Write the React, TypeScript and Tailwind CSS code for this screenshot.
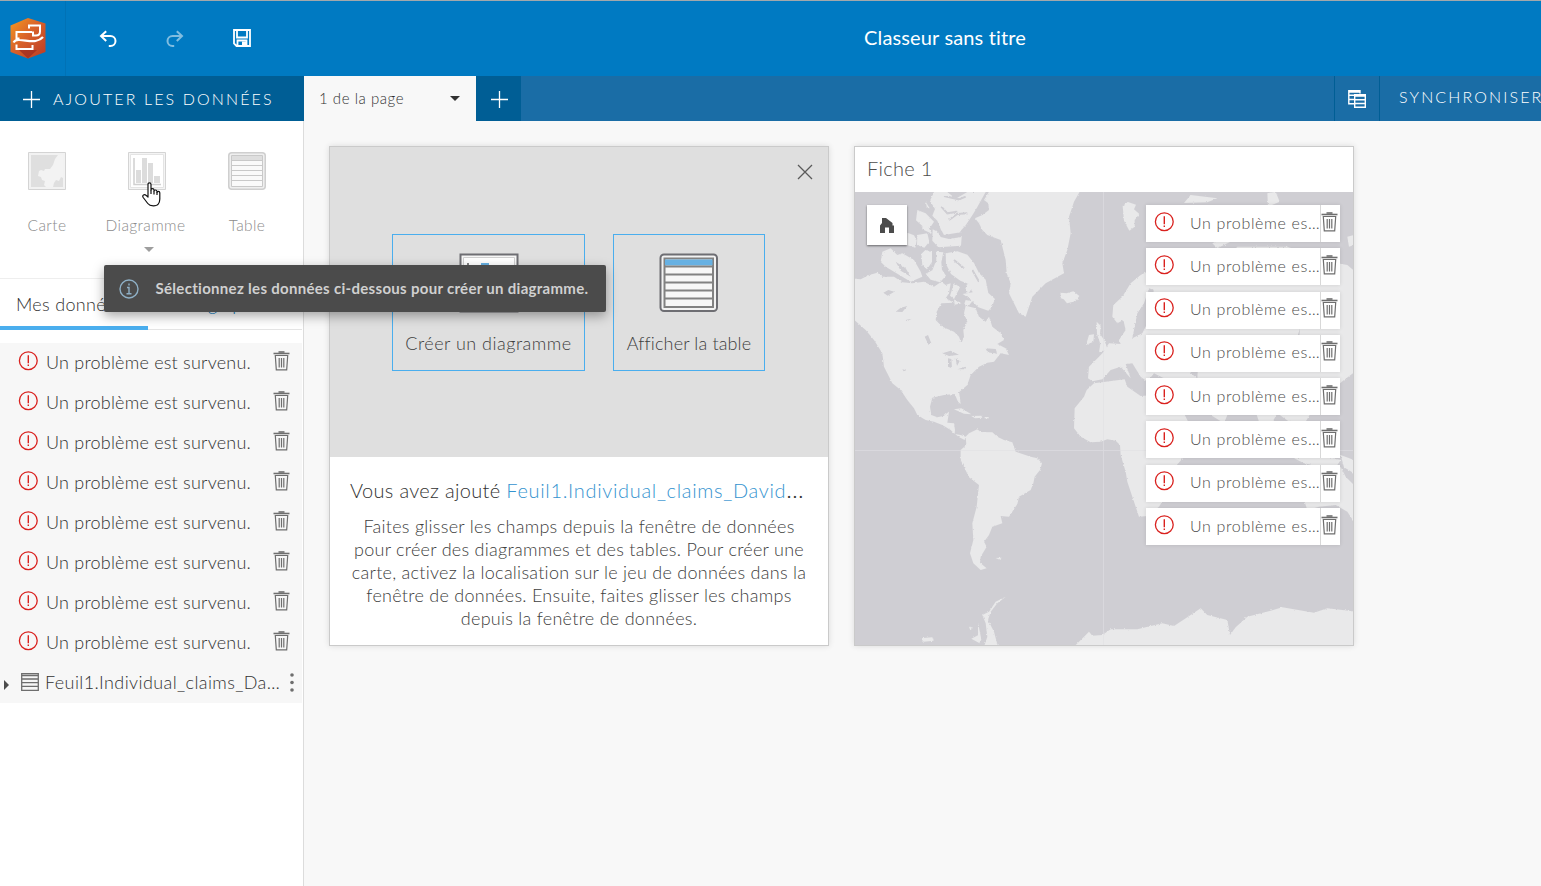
import type { ReactNode } from "react";
import { clsx } from "clsx";

const ERROR_TEXT = "Un problème est survenu.";
const sidebarErrors = Array.from({ length: 8 }, (_, i) => i);
const layerErrors = Array.from({ length: 8 }, (_, i) => i);

function Logo() {
  return (
    <svg width="36" height="41" viewBox="0 0 36 41">
      <defs>
        <linearGradient id="logo" x1="0" y1="0" x2="1" y2="1">
          <stop offset="0" stopColor="#f59a1f" />
          <stop offset="0.45" stopColor="#d9622a" />
          <stop offset="1" stopColor="#bb3a26" />
        </linearGradient>
      </defs>
      <path d="M18 0L35.500 5.500V34L18 40.500L.5 34V7.500z" fill="url(#logo)" />
      <path d="M9 32l9 8.500 9-8.500z" fill="#9c2a20" opacity="0.7" />
      <g fill="none" stroke="#fff" strokeWidth="2">
        <path d="M19 10.500V7.500h11v6q0 4-4 4h-3v-4" />
        <path d="M22 14H6.500v6.500h3" />
        <path d="M3.500 24.500q2-3 6-2.500c6 .4 12 1.800 16 1q5-1 7.500-4" strokeWidth="2.200" />
        <path d="M6.500 26.500V31h16v-4" />
      </g>
    </svg>
  );
}

function UndoIcon({ className }: { className?: string }) {
  return (
    <svg width="19" height="18" viewBox="0 0 19 18" fill="none" stroke="currentColor" strokeWidth="2" className={className}>
      <path d="M7.200 1.200L2 6l5.200 5M2.200 6h9.300a5 5 0 0 1 0 10H9.800" />
    </svg>
  );
}

function SaveIcon() {
  return (
    <svg width="18" height="18" viewBox="0 0 18 18">
      <path d="M1 1h16v16H3.500L1 14.500zM4 1v7.500h10V1M4.500 17v-5.500h9V17" fill="none" stroke="#fff" strokeWidth="1.800" />
      <path d="M9 12.500h4V17H9z" fill="#fff" />
    </svg>
  );
}

function PlusIcon() {
  return (
    <svg width="17" height="17" viewBox="0 0 17 17" stroke="#fff" strokeWidth="1.300">
      <path d="M8.500 0v17M0 8.500h17" />
    </svg>
  );
}

function Caret({ className }: { className?: string }) {
  return (
    <svg width="10" height="5" viewBox="0 0 10 5" fill="currentColor" className={className}>
      <path d="M0 0h10L5 5z" />
    </svg>
  );
}

function AlertIcon() {
  return (
    <svg width="20" height="20" viewBox="0 0 20 20" fill="none" stroke="#d9211e" className="shrink-0">
      <circle cx="10.300" cy="9.700" r="8.900" strokeWidth="1.300" />
      <path d="M10.300 4.200v8M10.300 13.500v1.500" strokeWidth="1.400" />
    </svg>
  );
}

function TrashIcon() {
  return (
    <svg width="17" height="20" viewBox="0 0 17 20" fill="none" stroke="#6e6e6e" className="shrink-0">
      <path d="M5.500 1h6" strokeWidth="1.600" />
      <path d="M.5 2.500h16" strokeWidth="1.600" />
      <path d="M2.300 4.500L3.300 18.800h10.400l1-14.300z" strokeWidth="1.200" />
      <path d="M6.200 7v9.500M8.500 7v9.500M10.800 7v9.500" strokeWidth="1.200" />
    </svg>
  );
}

function MapThumb() {
  return (
    <svg width="38" height="38" viewBox="0 0 38 38">
      <path d="M.5.5h37v37H.5z" fill="#f2f2f2" stroke="#d4d4d4" />
      <path d="M3 3h32v32H3z" fill="#dfdfdf" />
      <path d="M30 3h5v23l-2-1-2 4-3-1-2 3-1 4h-7l-2-2 1-4-3-1-1-3-3-1 1-5 2-1 3 1 1-2 5 0 3-4 2-6z" fill="#f3f3f3" />
    </svg>
  );
}

function ChartThumb() {
  return (
    <svg width="38" height="38" viewBox="0 0 38 38">
      <path d="M.5.5h37v37H.5z" fill="#f4f4f4" stroke="#d4d4d4" />
      <path d="M2.500 2.500h33v33h-33z" fill="#fff" stroke="#e4e4e4" />
      <path d="M6 6v26.500h27" fill="none" stroke="#d0d0d0" strokeWidth="1.500" />
      <path d="M8 18h5v13H8zM14 6h5v25h-5zM20 11h5v20h-5zM26 24h6v7h-6z" fill="#dcdcdc" />
    </svg>
  );
}

function TableThumb() {
  return (
    <svg width="38" height="38" viewBox="0 0 38 38">
      <rect x=".75" y=".75" width="36.500" height="36.500" rx="3" fill="#efefef" stroke="#cfcfcf" strokeWidth="1.500" />
      <path d="M3.500 3.500h31v31h-31z" fill="#fafafa" stroke="#c9c9c9" />
      <path d="M4 4h30v4H4z" fill="#dedede" />
      <path d="M3.500 8.500h31M3.500 13.500h31M3.500 18.500h31M3.500 23.500h31M3.500 28.500h31" stroke="#c9c9c9" />
    </svg>
  );
}

function LargeTable() {
  return (
    <svg width="60" height="60" viewBox="0 0 60 60">
      <rect x="1.500" y="1.500" width="56.500" height="56.500" rx="3.500" fill="#f3f3f3" stroke="#6e6e73" strokeWidth="2" />
      <path d="M5.500 5.500h48.500v48.500h-48.500z" fill="#f7f7f7" stroke="#828282" strokeWidth="2" />
      <path d="M6 6.500h47.500v6H6z" fill="#67b1e3" />
      <path d="M5 13.500h49M5 21.500h49M5 29.500h49M5 37.500h49M5 45.500h49" stroke="#828282" strokeWidth="2" />
    </svg>
  );
}

function LargeChart() {
  return (
    <svg width="60" height="60" viewBox="0 0 60 60" className="ml-px">
      <path d="M1.500 1.500h57v57h-57z" fill="#f7f7f7" stroke="#6e6e73" strokeWidth="2" />
      <path d="M4.500 4.500h51v51h-51z" fill="#fff" stroke="#d0d0d0" />
      <path d="M9 10v40h42" fill="none" stroke="#828282" strokeWidth="2" />
      <path d="M12 28h8v20h-8zM22 10h8v38h-8zM32 18h8v30h-8zM42 36h8v12h-8z" fill="#67b1e3" />
    </svg>
  );
}

function HandCursor() {
  return (
    <svg width="19" height="25" viewBox="0 0 19 25" fill="#fff" stroke="#111" strokeWidth="1.200" strokeLinejoin="round">
      <path d="M6 15V2.500q0-1.700 1.500-1.700T9 2.500V8q0-1.300 1.500-1.300T12 8.300V9q.2-1 1.500-1t1.500 1.500v.7q.3-.8 1.500-.8t1.300 1.500V17q0 3-1.500 5-1.200 1.800-5 1.800t-5.500-2.300L1.200 15.500q-1-1.700.3-2.500t2.500.3z" />
      <path d="M9 8v4M12 9v3.500M15 10v3" fill="none" />
    </svg>
  );
}

function WorldMap() {
  return (
    <svg width="498" height="453" viewBox="3 156 1494 1359" className="block bg-[#cfced3]">
      <defs>
        <filter id="coast" x="0" y="0" width="100%" height="100%">
          <feTurbulence type="fractalNoise" baseFrequency="0.16" numOctaves="3" seed="4" />
          <feDisplacementMap in="SourceGraphic" scale="7" xChannelSelector="R" yChannelSelector="G" />
        </filter>
      </defs>
      <g fill="#e9e9ea" filter="url(#coast)">
        {/* North and Central America */}
        <path d="M-10 415L20 418 45 405 70 398 85 410 120 410 145 427 175 430 210 425 240 440 262 425 275 435 290 430 285 460 275 475 300 488 262 490 248 515 245 540 265 560 300 575 315 590 322 610 330 590 328 570 340 545 330 520 335 497 365 505 375 530 395 545 405 530 415 560 440 580 450 600 430 612 455 625 465 645 440 640 420 665 400 668 375 680 350 705 340 735 315 757 318 775 320 792 312 785 302 762 270 765 235 773 228 800 232 825 250 832 268 828 285 815 280 848 300 850 303 870 302 882 320 885 335 890 332 900 316 892 300 880 290 870 265 855 240 845 215 840 190 825 180 805 160 780 140 750 115 730 90 680 85 640 60 600 35 570 -10 530z" />
        {/* Arctic archipelago */}
        <path d="M85 335L110 325 130 345 145 340 180 360 200 395 205 410 170 425 145 410 120 395 95 380 80 365z" />
        <path d="M202 342l12-12 20 6 0 30-15 22-14-12zM246 335l22 2-6 30 2 22 12 18-18 20-28-8-15-18 20-10 12-30zM275 340l35-6 30 10 20 25 15 30 20 20 8 40 20 18-10 25-10 10-30-10-25-25-22-15 30-5-12-25-25-10-28-20-15-30z" />
        <path d="M240 156l40 0 25 20 35-20h55l-25 45-15 25-20 30-20 22-25 -8-28 2-12-30-15-15 8-20-15-25zM190 210l25 10 25 25-12 18-22-4-20-18zM160 278l20 8 8 15-4 22-25-8zM190 285l30-5 6 25-15 18-22-8zM236 268l16 8 8 15 25 6 38-6-2 26-68 5-18-20zM262 270l50-8 8 15-50 8zM205 250l18 12 12 20-30-14zM215 185l12 20-8-2zM300 430l18 12-18 35-12-10zM340 430l16 12-12 18-10-12zM300 478l22 12-20 4zM335 480l20 4-12 15-12-8z" />
        {/* Greenland and Iceland */}
        <path d="M390 180L408 150 680 150 660 185 645 230 650 280 640 330 625 370 630 400 575 430 535 470 515 530 495 520 480 490 465 460 470 430 458 400 455 360 440 300 400 285 385 270 375 250 363 235 385 225 405 210 403 190z" />
        <path d="M620 458l18 2 20-6 18 14-12 16-25 6-10-12-10-4z" />
        {/* Caribbean */}
        <path d="M300 808l22-3 30 18-22-2zM352 828l30-1 3 6-22 2zM392 831h12v4h-12z" />
        {/* South America */}
        <path d="M335 890L345 880 370 868 380 876 415 877 430 890 450 900 475 907 485 935 530 950 550 955 564 970 558 990 542 1010 538 1030 530 1050 495 1070 490 1092 465 1130 440 1128 445 1150 415 1160 405 1185 390 1205 398 1220 380 1250 378 1268 398 1285 380 1290 358 1270 348 1240 358 1200 355 1150 368 1100 375 1035 345 1012 320 960 320 930 337 915zM425 1254l18-1-6 6z" />
        {/* British Isles */}
        <path d="M728 545l12 12-2 25 14 20 8 25-25 10 4-25-10-30zM705 585l15-2-2 22-22 10z" />
        {/* Eurasia */}
        <path d="M900 385L860 405 830 430 805 470 778 495 775 530 790 550 808 540 815 570 795 600 800 612 765 610 745 640 735 650 705 680 702 715 715 724 745 718 770 690 800 680 830 715 815 672 835 670 860 710 880 725 900 700 940 720 1000 725 1030 800 1110 850 1130 800 1200 800 1230 890 1270 820 1340 870 1370 820 1410 790 1440 745 1470 720 1497 700 1510 400 1480 375 1450 370 1300 320 1150 320 1070 400 1000 400 960 385z" />
        <path d="M806 198l16-12 24 8-6 14 16 14-14 18 0 20-16 12-16-30zM1010 165l80 10-30 12-70 2zM1240 160l25-5 12 30 -35 15zM1075 310l50-25 60-10-25 15-70 35zM1480 290l20-5v30l-15 5z" />
        {/* Africa */}
        <path d="M720 730L755 725 812 718 820 740 860 768 900 765 960 775 980 800 1010 860 1060 870 1040 910 990 950 960 985 940 1060 915 1100 880 1128 855 1130 840 1085 820 1025 815 995 800 945 798 915 785 902 760 898 740 905 710 907 680 890 660 865 662 805 690 770 698 750z" />
        {/* Indonesia and Australia */}
        <path d="M1320 955l80-10 60 15-20 30-90-20zM1460 945l40 15v40l-30-18zM1350 1080l20-20 50-20 40-60 15 30 25 25v110l-20-30-35-20-50 5-35 10z" />
        {/* Antarctica */}
        <path d="M455 1370L425 1385 405 1415 385 1425 395 1450 400 1490 390 1520 432 1520 420 1475 402 1440 410 1415 430 1390zM372 1448l10 50-5 12-25-14 20-10zM200 1495l35-3 4 10-30 3zM345 1460l12 3-8 8z" />
        <path d="M660 1520L690 1490 705 1475 715 1487 745 1485 770 1468 850 1468 925 1450 960 1458 1010 1425 1040 1405 1060 1425 1120 1440 1128 1485 1145 1462 1180 1430 1250 1412 1285 1402 1380 1418 1420 1405 1510 1415 1510 1520z" />
      </g>
      {/* Lakes, straits and inland seas */}
      <g fill="#cfced3" filter="url(#coast)">
        <path d="M88 458l15-8 18 5-20 12zM125 515l15-12 20-5-15 18zM155 540l18-4-14 8zM212 590l10-5 10 25-8 5zM265 640l25-8 25 12-30 4zM282 655l10 2 2 28-12-5zM305 655l12 8-8 15zM310 688l25-8-5 8zM395 625l30 2 5 14-30-4zM145 688l12 3-8 3z" />
        <path d="M850 520l20-30 15-45 15 5-15 50-5 50-15 30-30 15zM965 590l20-5 12 18-20 5zM1130 605l22-18-10 20zM885 660l50-10 20 20-50 10zM1010 620l25 5-5 90-20-15z" />
        <path d="M125 365l30 20 15 25-30-18zM1330 590l8-25-2 30z" />
      </g>
      <path d="M270 168l45 10 20-8M262 200l18 20 30-5M285 240l25-18 30-2M300 360l30 25M355 390l20 35M135 752l28 42" fill="none" stroke="#cfced3" strokeWidth="6" filter="url(#coast)" />
      <path d="M3 931.500H1497M748.500 156V1515" stroke="#e0e0e3" strokeWidth="2.500" opacity="0.7" />
    </svg>
  );
}

function Tool({ label, children, menu }: { label: string; children: ReactNode; menu?: boolean }) {
  return (
    <div className="flex w-[100px] flex-col items-center">
      {children}
      <span className={clsx("mt-[24px] text-[15.500px] leading-[22px] tracking-[0.400px] text-[#8c8c8c]", menu && "-ml-[3px]")}>{label}</span>
      {menu && <Caret className="mt-[11px] ml-1 text-[#9e9e9e]" />}
    </div>
  );
}

function Sidebar() {
  return (
    <aside className="flex w-[304px] shrink-0 flex-col border-r border-[#dcdcdc] bg-white">
      <div className="flex h-[158px] border-b border-[#eeeeee] pt-[31px] -ml-[3px]">
        <Tool label="Carte"><MapThumb /></Tool>
        <Tool label="Diagramme" menu><ChartThumb /></Tool>
        <Tool label="Table"><TableThumb /></Tool>
      </div>
      <div className="flex h-[51px] text-[18px] leading-[50px]">
        <div className="w-[148px] border-b-4 border-[#4aaeee] pl-4 tracking-[0.300px] text-[#323232]">Mes données</div>
        <div className="mr-px flex-1 border-b border-[#e4e4e4] pl-[30px] text-[#0079c1]">Infographie</div>
      </div>
      <ul className="mt-[13px] mr-px bg-[#f7f7f7] text-[18px] text-[#323232]">
        {sidebarErrors.map((i) => (
          <li key={i} className="flex h-10 items-center pl-[18px]">
            <span className="-mt-1"><AlertIcon /></span>
            <span className="-mt-0.5 ml-2 w-[227px] whitespace-nowrap tracking-[0.220px]">{ERROR_TEXT}</span>
            <span className="-mt-1"><TrashIcon /></span>
          </li>
        ))}
        <li className="flex h-10 items-center pl-1">
          <svg width="5" height="10" viewBox="0 0 5 10" className="mt-1" fill="#4c4c4c">
            <path d="M0 0l5 5-5 5z" />
          </svg>
          <svg width="18" height="18" viewBox="0 0 18 18" className="-mt-0.5 ml-3" fill="none" stroke="#6e6e6e" strokeWidth="1.300">
            <path d="M.7.7h16.600v16.600H.7zM.7 2.500h16.600M.7 6h16.600M.7 9.700h16.600M.7 13.400h16.600" />
          </svg>
          <span className="-mt-0.5 ml-[6px] w-[245px] whitespace-nowrap tracking-[0.400px]">
            Feuil1.Individual_claims_Da<span className="tracking-[4px]">…</span>
          </span>
          <svg width="4" height="20" viewBox="0 0 4 20" fill="#6e6e6e" className="-mt-px shrink-0">
            <circle cx="2" cy="2" r="1.800" />
            <circle cx="2" cy="9.500" r="1.800" />
            <circle cx="2" cy="17" r="1.800" />
          </svg>
        </li>
      </ul>
    </aside>
  );
}

function ActionBox({ label, className, children }: { label: string; className: string; children: ReactNode }) {
  return (
    <button className={clsx("flex h-[137px] flex-col items-center border border-[#4aaeee] pt-[18px] text-[18px] text-[#404040]", className)}>
      {children}
      <span className="mt-[17px] ml-px leading-[27px] whitespace-nowrap">{label}</span>
    </button>
  );
}

function WelcomeCard() {
  return (
    <section className="h-[500px] w-[500px] border border-[#cacaca] bg-white shadow-[0_0_6px_rgba(0,0,0,0.12)]">
      <div className="relative flex h-[310px] justify-center gap-7 bg-[#dfdfdf] pt-[87px] pr-0.5">
        <ActionBox label="Créer un diagramme" className="w-[193px] tracking-[0.500px]"><LargeChart /></ActionBox>
        <ActionBox label="Afficher la table" className="w-[152px] tracking-[0.150px]"><LargeTable /></ActionBox>
        <svg width="16" height="16" viewBox="0 0 16 16" stroke="#5a5a5a" strokeWidth="1.300" className="absolute top-[17px] right-[15px]">
          <path d="M1 1l14 14M15 1L1 15" />
        </svg>
      </div>
      <h2 className="mt-[19px] ml-5 text-[20px] leading-[28px] whitespace-nowrap tracking-[0.320px] text-[#323232]">
        Vous avez ajouté <span className="tracking-[0.680px] text-[#3593cf]">Feuil1.Individual_claims_David</span>
        <span className="text-[24px] leading-none">…</span>
      </h2>
      <p className="mt-[11px] text-center text-[18px] leading-[23px] tracking-[0.270px] text-[#404040]">
        Faites glisser les champs depuis la fenêtre de données<br />
        pour créer des diagrammes et des tables. Pour créer une<br />
        carte, activez la localisation sur le jeu de données dans la<br />
        fenêtre de données. Ensuite, faites glisser les champs<br />
        depuis la fenêtre de données.
      </p>
    </section>
  );
}

function MapCard() {
  return (
    <section className="h-[500px] w-[500px] border border-[#cacaca] bg-white shadow-[0_0_6px_rgba(0,0,0,0.12)]">
      <h2 className="h-[45px] pl-3 text-[20px] leading-[43px] tracking-[0.300px] text-[#4c4c4c]">Fiche 1</h2>
      <div className="relative">
        <WorldMap />
        <button className="absolute top-[13px] left-3 flex h-10 w-10 items-center justify-center bg-white shadow-[0_1px_2px_rgba(0,0,0,0.5)]">
          <svg width="14" height="15" viewBox="0 0 14 15" fill="#4c4c4c">
            <path d="M2 0h4l6.500 5v2.500H14V15H9V9.500H5V15H0V7.500L2 5z" />
          </svg>
        </button>
        <ul className="absolute top-[13px] right-[13px] flex w-[194px] flex-col gap-[6.300px] text-[16px] text-[#4c4c4c]">
          {layerErrors.map((i) => (
            <li key={i} className="flex h-[37px] items-center bg-white pl-2 shadow-[0_0_4px_rgba(0,0,0,0.12)]">
              <span className="-mt-1"><AlertIcon /></span>
              <span className="-mt-0.5 ml-4 w-[130px] overflow-hidden whitespace-nowrap tracking-[0.650px]">Un problème es…</span>
              <span className="flex h-full items-center border-l border-[#d8d8d8] pb-1"><TrashIcon /></span>
            </li>
          ))}
        </ul>
      </div>
    </section>
  );
}

export default function App() {
  return (
    <div className="relative flex h-[886px] w-[1541px] flex-col overflow-hidden bg-[#f8f8f8] font-['Lato',sans-serif] font-light">
      <header className="flex h-[76px] shrink-0 items-center border-t border-[#a3a8ab] bg-[#007ac2] text-white">
        <div className="flex h-full w-[66px] items-center border-r border-[#0072b6] pl-[10px]"><Logo /></div>
        <div className="flex items-center pl-[33px]">
          <UndoIcon />
          <UndoIcon className="ml-[47px] -scale-x-100 opacity-50" />
          <span className="-mt-0.5 ml-[49px]"><SaveIcon /></span>
        </div>
        <h1 className="-mt-[3px] ml-[613px] text-[20px] font-normal tracking-[0.150px]">Classeur sans titre</h1>
      </header>

      <div className="flex h-[45px] shrink-0 bg-[#1a6da6] text-white">
        <button className="flex w-[304px] items-center bg-[#005e95] pt-0.5 pl-[23px] text-[16px] tracking-[2.120px]">
          <PlusIcon />
          <span className="-mt-0.5 ml-[13px] whitespace-nowrap">AJOUTER LES DONNÉES</span>
        </button>
        <div className="flex w-[172px] items-center justify-between bg-[#f8f8f8] pr-4 pl-[15px] text-[15px] tracking-[0.550px] text-[#323232]">
          1 de la page
          <Caret />
        </div>
        <button className="flex w-[45px] items-center justify-center bg-[#005e95] pt-0.5 pl-0.5"><PlusIcon /></button>
        <div className="ml-auto flex w-[46px] items-center justify-center border-x border-[#005e95]">
          <svg width="18" height="18" viewBox="0 0 18 18" fill="none" stroke="#fff" strokeWidth="1.400">
            <path d="M12 3.500V.8H.8v13H6M.8 2h11M.8 5.300H6M.8 9.500H6" />
            <path d="M6.700 4.700h10.600v12.600H6.700zM6.700 6h10.600M6.700 9.700h10.600M6.700 13.500h10.600" />
          </svg>
        </div>
        <div className="w-[161px] overflow-hidden pl-[19px] text-[16px] leading-[42px] whitespace-nowrap tracking-[2.120px]">SYNCHRONISER</div>
      </div>

      <div className="flex min-h-0 flex-1">
        <Sidebar />
        <main className="flex gap-[25px] pt-[25px] pl-[25px]">
          <WelcomeCard />
          <MapCard />
        </main>
      </div>

      <div className="absolute top-[265px] left-[103.500px] flex h-[47px] w-[502px] items-center rounded-[2px] bg-[#4b4b4b] pl-[15px] shadow-[0_4px_12px_rgba(0,0,0,0.35)]">
        <svg width="20" height="20" viewBox="0 0 20 20" fill="none" stroke="#8fb0c6" strokeWidth="1.400">
          <circle cx="10" cy="10" r="9" />
          <path d="M10 4.500v2M8 8.500h2v6M7.500 14.700h5" />
        </svg>
        <span className="ml-[17px] text-[15px] font-bold whitespace-nowrap tracking-[0.300px] text-[#d0d0d0]">
          Sélectionnez les données ci-dessous pour créer un diagramme.
        </span>
      </div>
      <div className="absolute top-[182px] left-[142px]"><HandCursor /></div>
    </div>
  );
}
